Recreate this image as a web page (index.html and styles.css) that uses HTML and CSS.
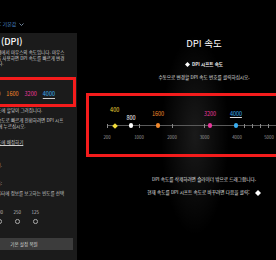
FILE: index.html
```html
<!DOCTYPE html>
<html lang="ko">
<head>
    <meta charset="UTF-8">
    <meta name="viewport" content="width=device-width, initial-scale=1.0">
    <title>DPI 속도</title>
    <link rel="stylesheet" href="styles.css">
</head>
<body>
    <div class="app">
        <div class="side-col">
            <div class="profile">프로필: 기본값 <svg class="chev" viewBox="0 0 10 6"><path d="M1 1l4 4 4-4" fill="none" stroke="#8aa4c0" stroke-width="1.6"/></svg></div>
            <div class="side">
                <h1 class="side-title">감도 (DPI)</h1>
                <p class="desc">DPI는 각 단계에서 마우스의 속도입니다. 마우스<br>할당된 버튼을 사용하면 DPI 속도를 빠르게 변경<br>할 수 있습니다.</p>

                <div class="levels-box">
                    <div class="levels">
                        <span class="lv c-yellow">400</span>
                        <span class="lv c-white">800</span>
                        <span class="lv c-orange">1600</span>
                        <span class="lv c-pink">3200</span>
                        <span class="lv c-blue current">4000</span>
                    </div>
                </div>

                <p class="desc gap-1">현재 DPI 모드에 할당이 그려집니다.</p>
                <p class="desc gap-2">DPI 시프트 속도로 빠르게 전환하려면 DPI 시프<br>트 키를 동시에 누르십시오.</p>
                <p class="desc gap-3"><a class="link" href="#">기본 DPI 모드에 배정하기</a></p>

                <div class="tail gap-4">필요한 경우 변경.</div>
                <div class="tail gap-5">보고율:</div>
                <p class="desc gap-6">마우스가 컴퓨터에 정보를 보고하는 빈도를 선택</p>

                <div class="rates">
                    <label class="rate"><span>1000</span><i class="radio"></i></label>
                    <label class="rate"><span>500</span><i class="radio"></i></label>
                    <label class="rate"><span>250</span><i class="radio"></i></label>
                    <label class="rate"><span>125</span><i class="radio"></i></label>
                </div>

                <button class="reset">기본 설정 복원</button>
            </div>
        </div>

        <div class="main">
            <h2 class="main-title">DPI 속도</h2>
            <div class="shift-key">
                <svg class="dia" viewBox="0 0 10 10"><path d="M5 0L10 5L5 10L0 5Z" fill="#fff"/></svg>
                <span>DPI 시프트 속도</span>
            </div>
            <p class="hint">수동으로 변경할 DPI 속도 번호를 클릭하십시오.</p>

            <div class="slider-box">
                <div class="track" id="track"></div>
            </div>

            <p class="hint gap-drag">DPI 속도를 삭제하려면 슬라이더 밖으로 드래그합니다.</p>
            <p class="hint gap-swap">현재 속도를 DPI 시프트 속도로 바꾸려면 다음을 클릭: <svg class="dia big" viewBox="0 0 10 10"><path d="M5 0L10 5L5 10L0 5Z" fill="#fff"/></svg></p>
        </div>
    </div>

    <script>
        // pixel position of each value along the track
        const ticks = [0, 32, 65, 97, 137, 145, 153, 161, 169, 177, 185, 193];
        const axis = [
            { text: "200", x: 0 },
            { text: "1000", x: 32 },
            { text: "2000", x: 65 },
            { text: "3000", x: 97.5 },
            { text: "4000", x: 130 },
            { text: "5000", x: 162 }
        ];
        const speeds = [
            { dpi: 400, x: 7.7, color: "c-yellow", level: "high", shape: "diamond" },
            { dpi: 800, x: 24, color: "c-white", level: "low" },
            { dpi: 1600, x: 51, color: "c-orange", level: "mid" },
            { dpi: 3200, x: 103, color: "c-pink", level: "mid" },
            { dpi: 4000, x: 129, color: "c-blue", level: "mid", current: true }
        ];

        const track = document.getElementById("track");

        ticks.forEach(x => {
            const t = document.createElement("span");
            t.className = "tick";
            t.style.left = x + "px";
            track.appendChild(t);
        });

        axis.forEach(a => {
            const l = document.createElement("span");
            l.className = "axis-label";
            l.style.left = a.x + "px";
            l.textContent = a.text;
            track.appendChild(l);
        });

        speeds.forEach(s => {
            const m = document.createElement("div");
            m.className = `marker ${s.color}`;
            m.style.left = s.x + "px";
            m.innerHTML = `
                <span class="marker-label ${s.level} ${s.current ? "current" : ""}">${s.dpi}</span>
                <span class="dot ${s.shape || ""}"></span>
            `;
            track.appendChild(m);
        });
    </script>
</body>
</html>
```

FILE: styles.css
```css
* {
    box-sizing: border-box;
}
body {
    margin: 0;
    width: 276px;
    height: 260px;
    overflow: hidden;
    background-color: #000;
    color: #d8d8d8;
    font-family: "Noto Sans CJK KR", "Noto Sans", sans-serif;
}
.app {
    display: flex;
    height: 260px;
    margin-left: -33px;
}

/* left column */
.side-col {
    width: 110px;
    flex: none;
    display: flex;
    flex-direction: column;
}
.profile {
    height: 33px;
    padding: 21px 0 0 19px;
    font-size: 5px;
    line-height: 6px;
    color: #4f8fd0;
    white-space: nowrap;
}
.chev {
    width: 5px;
    height: 3px;
    margin-left: 1px;
}
.side {
    flex: 1;
    padding: 3px 4px 0 8px;
    background-color: #1b1b1b;
    overflow: hidden;
}
.side-title {
    margin: 0;
    padding-left: 7px;
    font-size: 9px;
    line-height: 12px;
    font-weight: 500;
    color: #fff;
    white-space: nowrap;
}
.desc {
    margin: 2px 0 0;
    font-size: 4.5px;
    line-height: 5.7px;
    color: #cfcfcf;
    white-space: nowrap;
}
.gap-1 { margin-top: 1.2px; }
.gap-2 { margin-top: 4.3px; }
.gap-3 { margin-top: 10.6px; }
.gap-6 { margin-top: 4.3px; }
.link {
    color: #cfcfcf;
    text-decoration: underline;
}
.tail {
    display: flex;
    justify-content: flex-end;
    width: 27px;
    font-size: 4.5px;
    line-height: 5.7px;
    color: #cfcfcf;
    white-space: nowrap;
}
.gap-4 { margin-top: 17.3px; }
.gap-5 { margin-top: 12.3px; }

.levels-box {
    height: 30px;
    margin: 9.9px -3px 0 -4px;
    padding: 11px 0 0 2px;
    border: 3px solid #f41c1c;
}
.levels {
    display: flex;
    gap: 6px;
    font-size: 5.5px;
    line-height: 7px;
}
.lv.current {
    text-decoration: underline;
    text-decoration-color: #ccc;
    text-underline-offset: 1.5px;
}

.rates {
    display: flex;
    gap: 10.5px;
    margin-top: 11.8px;
}
.rate {
    display: flex;
    flex-direction: column;
    align-items: center;
    gap: 4.75px;
    font-size: 4.5px;
    line-height: 6px;
    color: #bbb;
}
.radio {
    width: 4.5px;
    height: 4.5px;
    border: 0.8px solid #aaa;
    border-radius: 50%;
}
.reset {
    display: block;
    width: 100%;
    height: 12px;
    margin-top: 14px;
    border: none;
    background-color: #3c3c3c;
    color: #ddd;
    font-family: inherit;
    font-size: 4.5px;
    padding: 0;
}

/* main area */
.main {
    width: 254px;
    flex: none;
    text-align: center;
    background: radial-gradient(ellipse 34px 100px at 118px 135px, rgba(255, 255, 255, 0.1), rgba(255, 255, 255, 0));
}
.main-title {
    margin: 37px 0 0;
    font-size: 9.5px;
    line-height: 12px;
    font-weight: 400;
    color: #fff;
}
.shift-key {
    display: flex;
    justify-content: center;
    align-items: center;
    gap: 2px;
    margin-top: 12.5px;
    font-size: 4.5px;
    line-height: 5px;
    font-weight: 700;
    color: #eee;
}
.dia {
    width: 5px;
    height: 5px;
}
.dia.big {
    width: 6px;
    height: 6px;
    margin-left: 4px;
    vertical-align: middle;
}
.hint {
    margin: 8px 0 0;
    font-size: 4.6px;
    line-height: 5px;
    color: #e0e0e0;
    white-space: nowrap;
}
.gap-drag { margin-top: 19.5px; }
.gap-swap { margin-top: 8px; }

.slider-box {
    height: 64px;
    margin: 13.5px 9px 0;
    border: 3px solid #f41c1c;
}
.track {
    position: relative;
    height: 1px;
    margin: 29.2px 18px 0;
    background-color: #5a5a5a;
}
.tick {
    position: absolute;
    top: -1.5px;
    width: 1px;
    height: 4px;
    background-color: #8a8a8a;
}
.axis-label {
    position: absolute;
    top: 9.8px;
    transform: translateX(-50%);
    font-size: 4.3px;
    line-height: 5px;
    color: #9a9a9a;
}
.marker {
    position: absolute;
    top: 0;
}
.dot {
    position: absolute;
    left: -2.25px;
    top: -1.75px;
    width: 4.5px;
    height: 4.5px;
    border-radius: 50%;
    background-color: currentColor;
}
.dot.diamond {
    left: -2px;
    top: -1.5px;
    width: 4px;
    height: 4px;
    border-radius: 0;
    transform: rotate(45deg);
}
.marker-label {
    position: absolute;
    transform: translateX(-50%);
    font-size: 5.5px;
    line-height: 6px;
    white-space: nowrap;
}
.marker-label.high { top: -18.7px; }
.marker-label.mid { top: -14.7px; }
.marker-label.low { top: -10.7px; }
.marker-label.current {
    border-bottom: 0.8px solid #ddd;
}

.c-yellow { color: #f2dc3a; }
.c-white { color: #fff; }
.c-orange { color: #f0882c; }
.c-pink { color: #e8389c; }
.c-blue { color: #3aaef0; }
```
